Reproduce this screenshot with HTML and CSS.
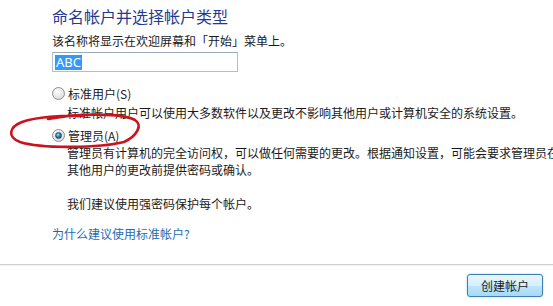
FILE: index.html
```html
<!DOCTYPE html>
<html lang="zh-cmn-Hans">

<head>
    <meta charset="UTF-8">
    <meta name="viewport" content="width=device-width, initial-scale=1.0">
    <title>创建新帐户</title>
    <link rel="stylesheet" href="styles.css">
</head>

<body>
    <div class="wizard">
        <div class="wizard-main">
            <h1 class="wizard-title">命名帐户并选择帐户类型</h1>
            <p class="wizard-tip">该名称将显示在欢迎屏幕和「开始」菜单上。</p>
            <div class="name-box">
                <span class="name-sel">ABC</span>
            </div>

            <label class="type-row type-std">
                <span class="radio"></span>
                <span>标准用户(S)</span>
            </label>
            <p class="type-desc desc-std">标准帐户用户可以使用大多数软件以及更改不影响其他用户或计算机安全的系统设置。</p>

            <label class="type-row type-admin">
                <span class="radio checked"></span>
                <span>管理员(A)</span>
            </label>
            <p class="type-desc">管理员有计算机的完全访问权，可以做任何需要的更改。根据通知设置，可能会要求管理员在<br>其他用户的更改前提供密码或确认。</p>

            <p class="type-desc note">我们建议使用强密码保护每个帐户。</p>

            <a class="why-link" href="">为什么建议使用标准帐户?</a>
        </div>

        <div class="wizard-foot">
            <span class="btn-create">创建帐户</span>
        </div>

        <!-- 红圈标注 -->
        <svg class="mark" width="160" height="50" viewBox="0 0 160 50">
            <path d="M48 9 C80 3, 122 3, 135 10 C143 15, 137 26, 124 32 C100 38, 42 39, 20 32 C7 27, 9 17, 22 12 C36 7, 62 5, 84 6"
                fill="none" stroke="#c8141e" stroke-width="2.6" stroke-linecap="round" />
        </svg>
    </div>
</body>

</html>
```

FILE: styles.css
```css
* {
    margin: 0;
    padding: 0;
}

html,
body {
    width: 553px;
    height: 306px;
    overflow: hidden;
    background: #fff;
}

body {
    font-family: "Noto Sans CJK SC", "Noto Sans", sans-serif;
    font-size: 12px;
    color: #1a1a1a;
}

.wizard {
    position: relative;
    height: 306px;
    display: flex;
    flex-direction: column;
}

.wizard-main {
    padding: 6px 0 0 52px;
    flex: 1;
    white-space: nowrap;
}

.wizard-title {
    font-size: 16px;
    font-weight: normal;
    line-height: 20px;
    color: #1f3a93;
}

.wizard-tip {
    margin-top: 7px;
    line-height: 16px;
}

.name-box {
    width: 182px;
    height: 18px;
    margin-top: 3px;
    border: 1px solid #abc0d3;
    border-top-color: #9aaabb;
    padding-left: 2px;
    display: flex;
    align-items: center;
}

.name-sel {
    background: #3399ff;
    color: #fff;
    font-family: "Noto Sans", sans-serif;
    font-size: 13px;
    line-height: 15px;
    padding: 0 1px;
}

.type-row {
    display: flex;
    align-items: center;
    gap: 3px;
    height: 16px;
}

.type-std {
    margin-top: 13px;
}

.type-admin {
    margin-top: 6px;
}

.radio {
    width: 11px;
    height: 11px;
    border: 1px solid #8e8f8f;
    border-radius: 50%;
    background: radial-gradient(circle at 40% 35%, #fff 0, #e6e6e6 55%, #cfcfcf 100%);
    display: flex;
    align-items: center;
    justify-content: center;
}

.radio.checked::after {
    content: "";
    width: 5px;
    height: 5px;
    border-radius: 50%;
    background: radial-gradient(circle at 40% 35%, #a6e0f8 0, #1c7cb0 50%, #0d3c5e 100%);
    border: 1px solid #23506e;
}

.type-desc {
    margin-left: 15px;
    margin-top: 1px;
    line-height: 17px;
}

.type-desc.desc-std {
    margin-top: 3px;
}

.type-desc.note {
    margin-top: 17px;
}

.why-link {
    display: block;
    margin-top: 14px;
    line-height: 16px;
    color: #1e6bb0;
    text-decoration: none;
}

.wizard-foot {
    height: 42px;
    border-top: 1px solid #cfcfcf;
    box-shadow: inset 0 1px 0 #f3f3f3;
    display: flex;
    justify-content: flex-end;
    align-items: flex-start;
    padding: 9px 10px 0 0;
    box-sizing: border-box;
}

.btn-create {
    width: 74px;
    height: 21px;
    border: 1px solid #3c7fb1;
    border-radius: 3px;
    background: linear-gradient(#e8f6fd, #d5effc 50%, #bee6fd 51%, #a7d9f5);
    box-shadow: 0 0 2px #7ccdf5;
    display: flex;
    align-items: center;
    justify-content: center;
    line-height: 16px;
}

.mark {
    position: absolute;
    left: 0;
    top: 110px;
}
```
